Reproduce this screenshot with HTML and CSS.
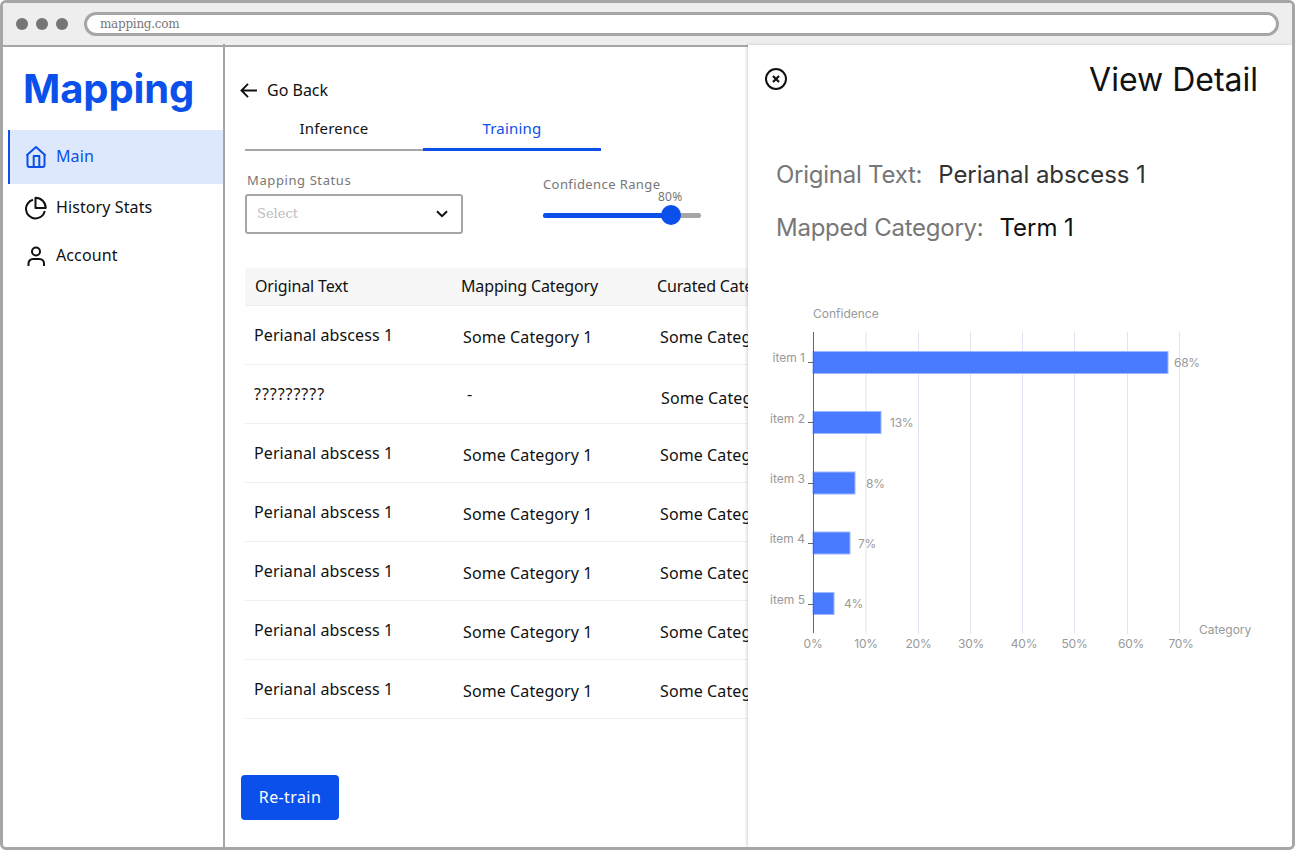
FILE: index.html
```html
<!DOCTYPE html>
<html lang="en">
<head>
<meta charset="utf-8">
<title>Mapping</title>
<link rel="stylesheet" href="styles.css">
</head>
<body>
<div class="frame">
  <header class="toolbar">
    <div class="dots"><span class="dot"></span><span class="dot"></span><span class="dot"></span></div>
    <div class="url">mapping.com</div>
  </header>
  <div class="app">
    <aside class="sidebar">
      <div class="logo">Mapping</div>
      <nav class="nav">
        <a class="nav-item nav-active">
          <svg class="nav-icon" viewBox="0 0 22 24" fill="none" stroke="currentColor" stroke-width="2" stroke-linejoin="round"><path d="M1.500 10.500 11 2l9.500 8.500"/><path d="M2.500 9.800V20a2 2 0 0 0 2 2h13a2 2 0 0 0 2-2V9.800"/><path d="M8.700 22V11h5.600v11"/></svg>
          <span class="nav-text">Main</span>
        </a>
        <a class="nav-item nav-plain">
          <svg class="nav-icon" viewBox="0 0 22 24" fill="none" stroke="currentColor" stroke-width="2" stroke-linejoin="round"><path d="M8 3.800A9.500 9.500 0 1 0 19.800 15"/><path d="M10.500 1.800A10.200 10.200 0 0 1 20.700 12H10.500z"/></svg>
          <span class="nav-text">History Stats</span>
        </a>
        <a class="nav-item nav-plain">
          <svg class="nav-icon" viewBox="0 0 22 24" fill="none" stroke="currentColor" stroke-width="2"><circle cx="11" cy="7.500" r="4"/><path d="M3.500 22v-2.500A4.500 4.500 0 0 1 8 15h6.500a4.500 4.500 0 0 1 4.500 4.500V22"/></svg>
          <span class="nav-text">Account</span>
        </a>
      </nav>
    </aside>
    <main class="main">
      <div class="back">
        <svg class="back-icon" viewBox="0 0 18 16" fill="none" stroke="currentColor" stroke-width="2"><path d="M8.500 1 1.500 8l7 7M2 8h16"/></svg>
        <span>Go Back</span>
      </div>
      <div class="tabs">
        <div class="tab">Inference</div>
        <div class="tab tab-active">Training</div>
      </div>
      <div class="filters">
        <div class="status">
          <label class="status-label">Mapping Status</label>
          <div class="select">
            <span class="select-text">Select</span>
            <svg class="chevron" viewBox="0 0 12 8" fill="none" stroke="currentColor" stroke-width="2"><path d="m1 1.200 5 5 5-5"/></svg>
          </div>
        </div>
        <div class="range">
          <div class="range-label">Confidence Range</div>
          <div class="slider">
            <div class="track"><div class="fill" style="width:128px"></div></div>
            <div class="thumb"></div>
            <div class="value">80%</div>
          </div>
        </div>
      </div>
      <div class="table">
        <div class="row head">
          <div class="cell c1 h1">Original Text</div>
          <div class="cell c2 h2">Mapping Category</div>
          <div class="cell c3 h3">Curated Category</div>
        </div>
        <div class="row"><div class="cell c1 up">Perianal abscess 1</div><div class="cell c2 down">Some Category 1</div><div class="cell c3 down">Some Category 1</div></div>
        <div class="row"><div class="cell c1 up unknown">?????????</div><div class="cell c2 up dash">-</div><div class="cell c3 shift">Some Category 1</div></div>
        <div class="row"><div class="cell c1 up">Perianal abscess 1</div><div class="cell c2 down">Some Category 1</div><div class="cell c3 down">Some Category 1</div></div>
        <div class="row"><div class="cell c1 up">Perianal abscess 1</div><div class="cell c2 down">Some Category 1</div><div class="cell c3 down">Some Category 1</div></div>
        <div class="row"><div class="cell c1 up">Perianal abscess 1</div><div class="cell c2 down">Some Category 1</div><div class="cell c3 down">Some Category 1</div></div>
        <div class="row"><div class="cell c1 up">Perianal abscess 1</div><div class="cell c2 down">Some Category 1</div><div class="cell c3 down">Some Category 1</div></div>
        <div class="row"><div class="cell c1 up">Perianal abscess 1</div><div class="cell c2 down">Some Category 1</div><div class="cell c3 down">Some Category 1</div></div>
      </div>
      <button class="retrain">Re-train</button>
    </main>
    <section class="panel">
      <div class="panel-head">
        <svg class="close" viewBox="0 0 24 24" fill="none" stroke="currentColor" stroke-width="2"><circle cx="12" cy="12" r="10"/><path d="m9 9 6 6m0-6-6 6" stroke-width="2.200"/></svg>
        <h1 class="panel-title">View Detail</h1>
      </div>
      <div class="details">
        <div class="detail"><span class="detail-key">Original Text:</span><span class="detail-val">Perianal abscess 1</span></div>
        <div class="detail"><span class="detail-key">Mapped Category:</span><span class="detail-val detail-dark">Term 1</span></div>
      </div>
      <svg class="chart" viewBox="748 300 544 360" width="544" height="360">
        <g class="grid">
          <path d="M866 332V634M918.500 332V634M970.500 332V634M1022.500 332V634M1074.500 332V634M1127.500 332V634M1179.500 332V634"/>
        </g>
        <g class="bars">
          <rect x="813" y="351.500" width="355" height="22"/>
          <rect x="813" y="411.500" width="68" height="22"/>
          <rect x="813" y="472" width="42" height="22"/>
          <rect x="813" y="532" width="37" height="22"/>
          <rect x="813" y="592.500" width="21" height="22"/>
        </g>
        <path class="axis" d="M813.500 332V633M808 362.500h5M808 422.500h5M808 483.500h5M808 543.500h5M808 604.500h5"/>
        <g class="labels">
          <text x="813" y="318">Confidence</text>
          <text x="1199" y="634">Category</text>
        </g>
        <g class="labels end">
          <text x="805" y="362">item 1</text>
          <text x="805" y="423">item 2</text>
          <text x="805" y="483">item 3</text>
          <text x="805" y="543">item 4</text>
          <text x="805" y="604">item 5</text>
        </g>
        <g class="labels pct">
          <text x="1174" y="367">68%</text>
          <text x="890" y="427">13%</text>
          <text x="866" y="488">8%</text>
          <text x="858" y="548">7%</text>
          <text x="844" y="608">4%</text>
        </g>
        <g class="labels mid pct">
          <text x="813" y="648">0%</text>
          <text x="866" y="648">10%</text>
          <text x="918.500" y="648">20%</text>
          <text x="971" y="648">30%</text>
          <text x="1024" y="648">40%</text>
          <text x="1074.500" y="648">50%</text>
          <text x="1131" y="648">60%</text>
          <text x="1181" y="648">70%</text>
        </g>
      </svg>
    </section>
  </div>
</div>
</body>
</html>
```
FILE: styles.css
```css
* { box-sizing: border-box; }
html, body { margin: 0; padding: 0; background: #fff; }
body { font-family: "Noto Sans", "Open Sans", sans-serif; color: #111; }

.frame {
  position: relative;
  width: 1295px;
  height: 850px;
  border: 3px solid #a6a6a6;
  border-radius: 6px;
  overflow: hidden;
  display: flex;
  flex-direction: column;
  background: #fff;
}

.toolbar {
  flex: none;
  height: 44px;
  background: #eee;
  border-bottom: 2px solid #a6a6a6;
  display: flex;
  align-items: center;
  padding: 0 13px;
}
.dots { display: flex; gap: 8px; margin-right: 16px; }
.dot { width: 12px; height: 12px; border-radius: 50%; background: #757575; }
.url {
  flex: 1;
  height: 24px;
  border: 3px solid #a6a6a6;
  border-radius: 12px;
  background: #fff;
  padding-left: 13px;
  font: 12px/19px "DejaVu Serif", serif;
  letter-spacing: -.27px;
  color: #777;
}

.app { flex: 1; display: flex; min-height: 0; }

.sidebar {
  flex: none;
  width: 222px;
  margin-top: -3px;
  padding-top: 3px;
  border-right: 2px solid #a6a6a6;
  position: relative;
}
.logo {
  font: 700 40px/48px Inter, sans-serif;
  letter-spacing: -.1px;
  color: #0b50ea;
  padding: 18px 0 0 20px;
}
.nav { margin-top: 17px; padding-left: 5px; display: flex; flex-direction: column; }
.nav-item {
  display: flex;
  align-items: center;
  gap: 9px;
  padding-left: 17px;
  font-size: 16px;
  letter-spacing: .1px;
}
.nav-active {
  height: 54px;
  background: #dde8fc;
  border-left: 2px solid #0b50ea;
  padding-left: 15px;
  color: #0b50ea;
}
.nav-plain { height: 48px; }
.nav-icon { width: 22px; height: 24px; flex: none; }
.nav-text { margin-bottom: 2px; }

.main {
  flex: 1;
  min-width: 0;
  overflow: hidden;
  padding: 31px 0 0 15px;
}
.back { display: flex; align-items: center; gap: 10px; height: 24px; font-size: 16px; }
.back-icon { width: 17px; height: 15px; flex: none; }
.tabs { display: flex; margin: 6px 0 0 5px; }
.tab {
  width: 178px;
  height: 43px;
  padding-top: 8px;
  text-align: center;
  font-size: 15px;
  line-height: 24px;
  letter-spacing: .2px;
  border-bottom: 2px solid #a6a6a6;
}
.tab-active { color: #0b50ea; border-bottom: 3px solid #0b50ea; }

.filters { display: flex; gap: 80px; margin: 20px 0 0 5px; }
.status { width: 218px; }
.status-label {
  display: block;
  padding-left: 2px;
  font-size: 13px;
  line-height: 18px;
  letter-spacing: .6px;
  color: #777;
}
.select {
  margin-top: 5px;
  height: 40px;
  border: 2px solid #a6a6a6;
  border-radius: 3px;
  display: flex;
  align-items: center;
  justify-content: space-between;
  padding: 0 13px 2px 10px;
}
.select-text { font: 13px "DejaVu Serif", serif; color: #bbb; }
.chevron { width: 12px; height: 8px; margin-top: 2px; }
.range { width: 158px; padding-top: 4px; }
.range-label { font-size: 13px; line-height: 18px; letter-spacing: .4px; color: #777; white-space: nowrap; }
.slider { position: relative; margin-top: 12px; height: 20px; display: flex; align-items: center; }
.track { width: 100%; height: 5px; border-radius: 3px; background: #a6a6a6; overflow: hidden; }
.fill { height: 100%; background: #0b50ea; }
.thumb {
  position: absolute;
  left: 118px;
  top: 0;
  width: 20px;
  height: 20px;
  border-radius: 50%;
  background: #0b50ea;
}
.value {
  position: absolute;
  left: 115px;
  top: -16px;
  font-size: 12px;
  line-height: 15px;
  letter-spacing: .2px;
  color: #777;
}

.table { margin: 34px 0 0 5px; width: 1000px; }
.row {
  display: flex;
  align-items: center;
  height: 59px;
  border-bottom: 1px solid #eee;
  font-size: 16px;
  letter-spacing: .1px;
  white-space: nowrap;
}
.head { height: 38px; background: #f7f7f7; letter-spacing: -.15px; }
.c1 { width: 218px; padding-left: 9px; }
.c2 { width: 197px; }
.c3 { width: 300px; }
.h1 { padding-left: 10px; width: 216px; padding-bottom: 2px; }
.h2 { width: 196px; padding-bottom: 2px; }
.h3 { padding-bottom: 2px; }
.up { padding-bottom: 1px; }
.down { padding-top: 3px; }
.unknown { letter-spacing: .95px; }
.dash { padding-left: 4px; }
.shift { padding-left: 1px; padding-top: 7px; }

.retrain {
  display: block;
  margin: 56px 0 0 1px;
  width: 98px;
  height: 45px;
  border: 0;
  border-radius: 4px;
  background: #0b50ea;
  color: #fff;
  font: 16px "Noto Sans", sans-serif;
  letter-spacing: .4px;
  padding-bottom: 3px;
}

.panel {
  position: absolute;
  top: 42px;
  right: 0;
  bottom: 0;
  width: 544px;
  background: #fff;
  box-shadow: -1px 0 3px rgba(0, 0, 0, .18);
}
.panel-head {
  display: flex;
  align-items: center;
  justify-content: space-between;
  height: 36px;
  margin-top: 16px;
  padding: 0 34px 0 16px;
}
.close { width: 24px; height: 24px; }
.panel-title { margin: 2px 0 0; font: 400 32px/36px Inter, sans-serif; color: #111; }
.details { margin-top: 63px; padding-left: 28px; display: flex; flex-direction: column; gap: 23px; }
.detail { display: flex; gap: 16px; font: 24px/30px Inter, sans-serif; }
.detail-key { color: #777; letter-spacing: -.25px; }
.detail-val { color: #333; letter-spacing: -.05px; }
.detail-dark { color: #111; }

.chart { display: block; margin-top: 57px; }
.grid path { stroke: #dfe4f0; stroke-width: 1; fill: none; }
.bars rect { fill: #487bff; stroke: #9db8ff; stroke-width: 1; }
.axis { stroke: #666; stroke-width: 1; fill: none; }
.labels text { font: 12px Inter, sans-serif; fill: #999; }
.labels.pct text { letter-spacing: -.25px; }
.end text { text-anchor: end; }
.mid text { text-anchor: middle; }
```
